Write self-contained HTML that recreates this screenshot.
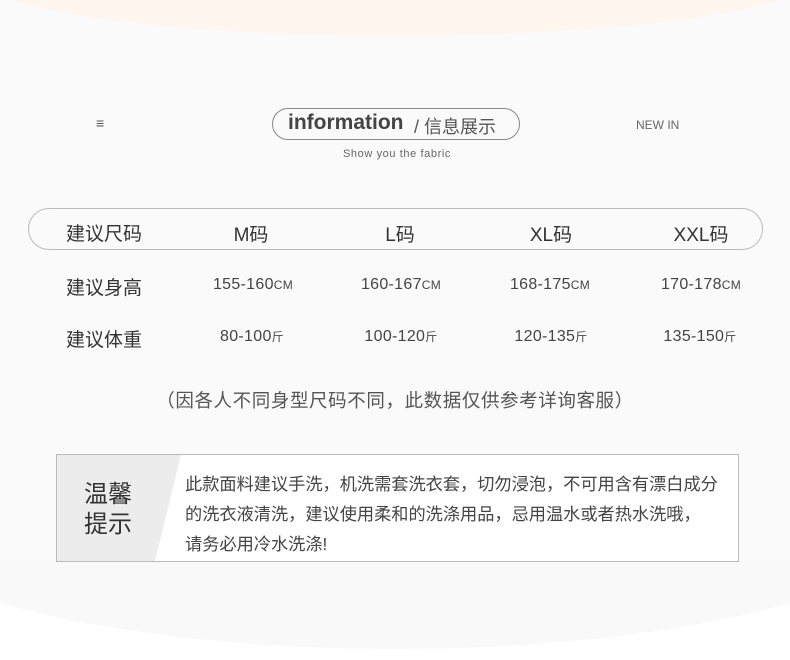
<!DOCTYPE html>
<html><head><meta charset="utf-8">
<style>
*{margin:0;padding:0;box-sizing:border-box}
body{width:790px;height:660px;overflow:hidden;background:#fff;position:relative;font-family:"Liberation Sans","Noto Sans CJK SC",sans-serif;color:#444}
.bg{position:absolute;left:0;top:0;width:790px;height:560px;background:#fafafa}
.top{position:absolute;left:-25px;top:-84px;width:840px;height:120px;border-radius:50%;background:#fff6f0}
.bot{position:absolute;left:-150px;top:353px;width:1090px;height:296px;border-radius:50%;background:#f9f9f9}
.a{position:absolute;white-space:nowrap}
.c{transform:translateX(-50%)}
.pill{position:absolute;left:272px;top:108px;width:248px;height:32px;border:1.5px solid #888;border-radius:16px}
.tbl{position:absolute;left:28px;top:208px;width:735px;height:42px;border:1px solid #bbb;border-radius:21px}
.lab{font-size:19px;color:#333}
.num{font-size:16px;color:#444;letter-spacing:.3px}
.num small{font-size:12px}
</style></head><body>
<div class="bot"></div>
<div class="bg"></div>
<div class="top"></div>

<div class="a" style="left:96px;top:115px;font-size:14px;color:#555">≡</div>
<div class="pill"></div>
<div class="a" style="left:288px;top:111px;font-size:21px;font-weight:bold;color:#444">information</div>
<div class="a" style="left:414px;top:113px;font-size:18px;color:#555">/ 信息展示</div>
<div class="a c" style="left:397px;top:148px;font-size:11px;color:#666;letter-spacing:.6px">Show you the fabric</div>
<div class="a" style="left:636px;top:118px;font-size:12px;color:#666">NEW IN</div>

<div class="tbl"></div>
<div class="a lab" style="left:66px;top:219px">建议尺码</div>
<div class="a lab c" style="left:251px;top:220px">M码</div>
<div class="a lab c" style="left:400px;top:220px">L码</div>
<div class="a lab c" style="left:551px;top:220px">XL码</div>
<div class="a lab c" style="left:701px;top:220px">XXL码</div>

<div class="a lab" style="left:66px;top:273px">建议身高</div>
<div class="a num c" style="left:253px;top:276px">155-160<small>CM</small></div>
<div class="a num c" style="left:401px;top:276px">160-167<small>CM</small></div>
<div class="a num c" style="left:550px;top:276px">168-175<small>CM</small></div>
<div class="a num c" style="left:701px;top:276px">170-178<small>CM</small></div>

<div class="a lab" style="left:66px;top:325px">建议体重</div>
<div class="a num c" style="left:252px;top:328px">80-100<small>斤</small></div>
<div class="a num c" style="left:401px;top:328px">100-120<small>斤</small></div>
<div class="a num c" style="left:551px;top:328px">120-135<small>斤</small></div>
<div class="a num c" style="left:700px;top:328px">135-150<small>斤</small></div>

<div class="a c" style="left:395px;top:387px;font-size:18.5px;letter-spacing:.6px;color:#555">（因各人不同身型尺码不同，此数据仅供参考详询客服）</div>

<div class="a" style="left:56px;top:454px;width:683px;height:108px;border:1px solid #bbb;background:#fff"></div>
<svg class="a" style="left:57px;top:455px" width="125" height="106"><polygon points="0,0 124,0 98,106 0,106" fill="#ececec"/></svg>
<div class="a" style="left:84px;top:480px;font-size:24px;line-height:30px;color:#333;white-space:normal;width:56px">温馨<br>提示</div>
<div class="a" style="left:185px;top:469px;font-size:17.2px;line-height:30px;color:#444">此款面料建议手洗，机洗需套洗衣套，切勿浸泡，不可用含有漂白成分<br>的洗衣液清洗，建议使用柔和的洗涤用品，忌用温水或者热水洗哦，<br>请务必用冷水洗涤!</div>
</body></html>
